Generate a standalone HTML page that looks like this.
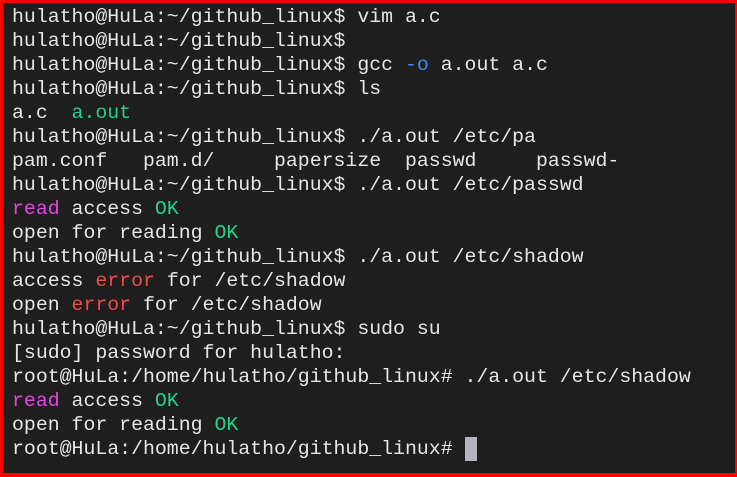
<!DOCTYPE html>
<html><head><style>
html,body{margin:0;padding:0;}
body{width:737px;height:477px;background:#ff0000;position:relative;overflow:hidden;}
.t{position:absolute;left:3px;top:3px;width:732px;height:470px;background:#1e1e1e;}
pre{margin:0;position:absolute;left:9px;top:2px;font-family:"Liberation Mono",monospace;font-size:19.85px;line-height:24px;color:#e6e6e6;}
.m{color:#e545e5}.g{color:#23d18b}.r{color:#f14c4c}.b{color:#3b8eea}
.c{display:inline-block;width:12px;height:24px;background:#b4b4c0;vertical-align:top;}
</style></head><body><div class="t"><pre>hulatho@HuLa:~/github_linux$ vim a.c
hulatho@HuLa:~/github_linux$
hulatho@HuLa:~/github_linux$ gcc <span class="b">-o</span> a.out a.c
hulatho@HuLa:~/github_linux$ ls
a.c  <span class="g">a.out</span>
hulatho@HuLa:~/github_linux$ ./a.out /etc/pa
pam.conf   pam.d/     papersize  passwd     passwd-
hulatho@HuLa:~/github_linux$ ./a.out /etc/passwd
<span class="m">read</span> access <span class="g">OK</span>
open for reading <span class="g">OK</span>
hulatho@HuLa:~/github_linux$ ./a.out /etc/shadow
access <span class="r">error</span> for /etc/shadow
open <span class="r">error</span> for /etc/shadow
hulatho@HuLa:~/github_linux$ sudo su
[sudo] password for hulatho:
root@HuLa:/home/hulatho/github_linux# ./a.out /etc/shadow
<span class="m">read</span> access <span class="g">OK</span>
open for reading <span class="g">OK</span>
root@HuLa:/home/hulatho/github_linux# <span class="c"></span></pre></div></body></html>
